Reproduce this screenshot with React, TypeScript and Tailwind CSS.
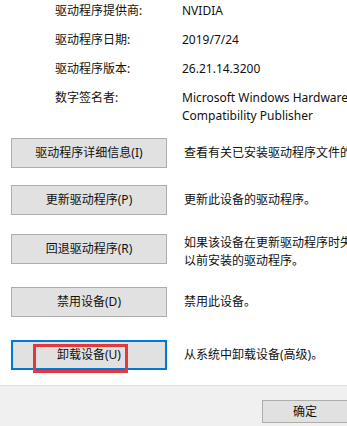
const font = "font-['Noto_Sans','Noto_Sans_CJK_SC',sans-serif]"

const info = [
  { label: '驱动程序提供商:', value: ['NVIDIA'] },
  { label: '驱动程序日期:', value: ['2019/7/24'] },
  { label: '驱动程序版本:', value: ['26.21.14.3200'] },
  { label: '数字签名者:', value: ['Microsoft Windows Hardware', 'Compatibility Publisher'] },
]

const actions = [
  { btn: '驱动程序详细信息(I)', desc: ['查看有关已安装驱动程序文件的详细信息。'], mt: 'mt-[13px]' },
  { btn: '更新驱动程序(P)', desc: ['更新此设备的驱动程序。'], mt: 'mt-[17px]' },
  { btn: '回退驱动程序(R)', desc: ['如果该设备在更新驱动程序时失败，则回退到', '以前安装的驱动程序。'], mt: 'mt-[19px]' },
  { btn: '禁用设备(D)', desc: ['禁用此设备。'], mt: 'mt-[23px]' },
  { btn: '卸载设备(U)', desc: ['从系统中卸载设备(高级)。'], mt: 'mt-[23px]', focus: true },
]

export default function App() {
  return (
    <div className={`w-[347px] h-[426px] overflow-hidden bg-white text-[12px] text-[#111] flex flex-col ${font}`}>
      <div className="pt-[2px] pl-[55px] flex flex-col gap-[11px]">
        {info.map((r) => (
          <div key={r.label} className="flex leading-[18px]">
            <div className="w-[127px] shrink-0">{r.label}</div>
            <div className="whitespace-nowrap">
              {r.value.map((v) => (
                <div key={v}>{v}</div>
              ))}
            </div>
          </div>
        ))}
      </div>

      {actions.map((a) => (
        <div key={a.btn} className={`${a.mt} flex items-center h-[30px] pl-[11px]`}>
          <div
            className={
              a.focus
                ? 'relative w-[156px] h-[30px] shrink-0 flex items-center justify-center bg-[#e1e1e1] border-2 border-[#0078d7]'
                : 'w-[156px] h-[30px] shrink-0 flex items-center justify-center bg-[#e1e1e1] border border-[#adadad]'
            }
          >
            <span className="leading-[16px]">{a.btn}</span>
            {a.focus && (
              <span className="absolute left-[20px] top-[2px] w-[95px] h-[29px] border-[3px] border-[#e2393c]" />
            )}
          </div>
          <div className={`ml-[17px] whitespace-nowrap leading-[18px] ${a.desc.length > 1 ? 'pt-[5px]' : ''}`}>
            {a.desc.map((d) => (
              <div key={d}>{d}</div>
            ))}
          </div>
        </div>
      ))}

      <div className="mt-[15px] flex-1 border-t border-[#dfdfdf] bg-[#f0f0f0] pt-[14px] pl-[262px]">
        <div className="w-[86px] h-[23px] flex items-center justify-center bg-[#e1e1e1] border border-[#adadad]">
          确定
        </div>
      </div>
    </div>
  )
}
